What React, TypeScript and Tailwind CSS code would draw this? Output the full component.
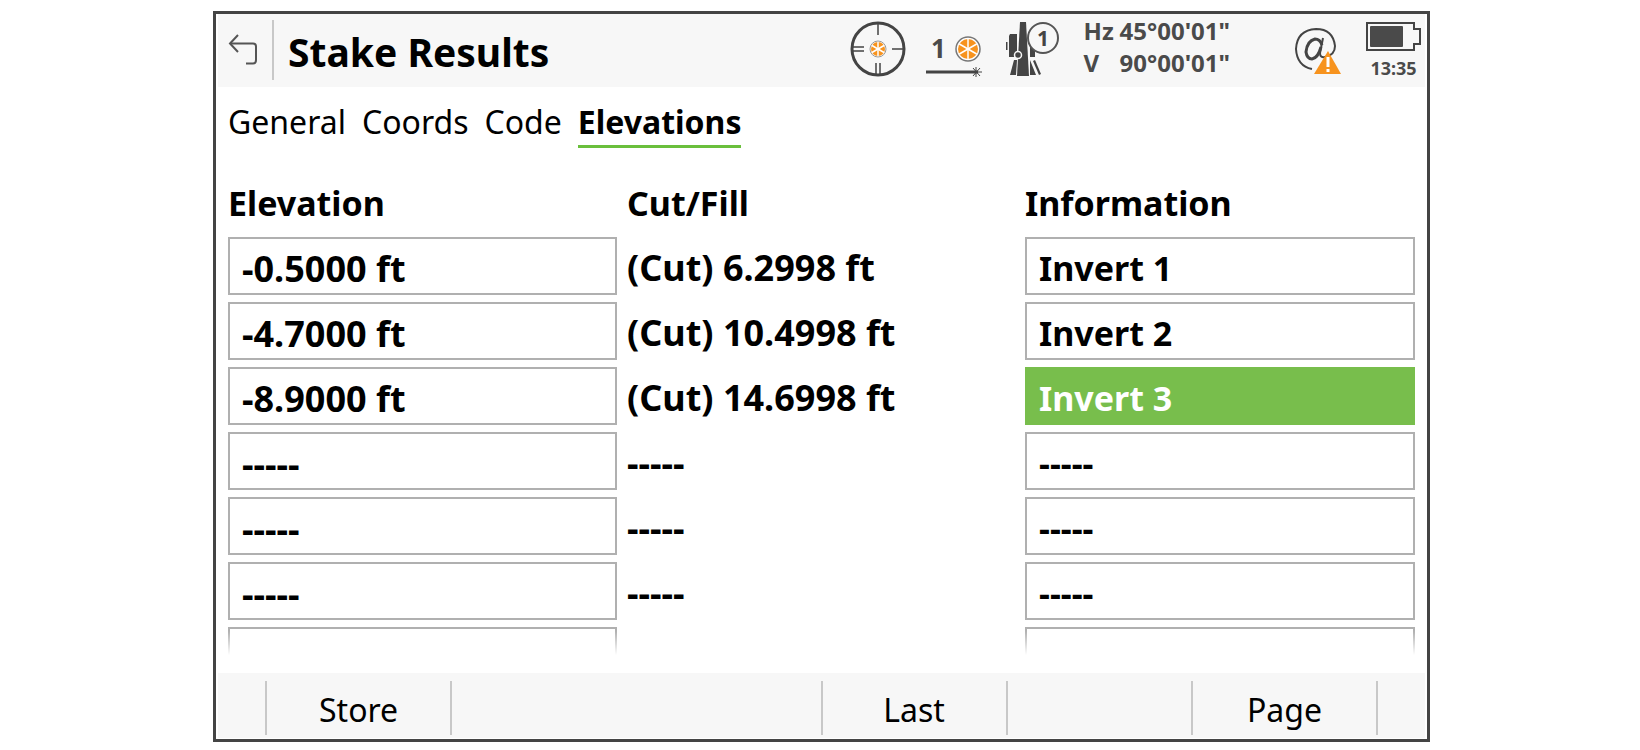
import { useState } from 'react';

interface StakeRow {
  elevation: string;
  cutFill: string;
  info: string;
}

const EMPTY = '-----';

const TABS = ['General', 'Coords', 'Code', 'Elevations'];

const ROWS: StakeRow[] = [
  { elevation: '-0.5000 ft', cutFill: '(Cut) 6.2998 ft', info: 'Invert 1' },
  { elevation: '-4.7000 ft', cutFill: '(Cut) 10.4998 ft', info: 'Invert 2' },
  { elevation: '-8.9000 ft', cutFill: '(Cut) 14.6998 ft', info: 'Invert 3' },
  { elevation: EMPTY, cutFill: EMPTY, info: EMPTY },
  { elevation: EMPTY, cutFill: EMPTY, info: EMPTY },
  { elevation: EMPTY, cutFill: EMPTY, info: EMPTY },
  { elevation: '', cutFill: '', info: '' },
];

// span = number of soft key slots the entry covers
const SOFT_KEYS = [
  { label: 'Store', span: 'col-span-1' },
  { label: '', span: 'col-span-2' },
  { label: 'Last', span: 'col-span-1' },
  { label: '', span: 'col-span-1' },
  { label: 'Page', span: 'col-span-1' },
];

function BackIcon() {
  return (
    <svg width="30" height="32" viewBox="0 0 30 32" fill="none" stroke="#555" strokeWidth="2">
      <path d="M10 1L2 9.500L10 18" />
      <path d="M2 9.500H25Q28 9.500 28 12.500V26Q28 29.500 25 29.500H18" />
    </svg>
  );
}

// Orange prism glyph shared by the target and reflector icons
function Prism({ cx, cy, r }: { cx: number; cy: number; r: number }) {
  return (
    <g stroke="none">
      <circle cx={cx} cy={cy} r={r} fill="#f7931e" />
      {[0, 60, 120].map(a => (
        <line
          key={a}
          x1={cx}
          y1={cy - r}
          x2={cx}
          y2={cy + r}
          stroke="#fff"
          strokeWidth="1.5"
          transform={`rotate(${a} ${cx} ${cy})`}
        />
      ))}
    </g>
  );
}

function TargetIcon() {
  return (
    <svg width="56" height="56" viewBox="0 0 56 56" fill="none" stroke="#444">
      <circle cx="28" cy="28" r="26" strokeWidth="3" />
      <path d="M28 2V14M42 28H54M2 26H14M2 30H14M26 42V54M30 42V54" strokeWidth="1.5" />
      <circle cx="28" cy="28" r="8" fill="#fff" stroke="#999" strokeWidth="1" />
      <Prism cx={28} cy={28} r={7} />
    </svg>
  );
}

function ReflectorIcon() {
  return (
    <svg className="overflow-visible" width="56" height="42" viewBox="0 0 56 42" fill="none" stroke="#444">
      <text x="5" y="22" fill="#4a4a4a" stroke="none" fontSize="26" fontWeight="700">1</text>
      <circle cx="42" cy="13" r="12" fill="#fff" stroke="#777" strokeWidth="1.500" />
      <Prism cx={42} cy={13} r={10} />
      <path d="M0 36H52" strokeWidth="3" />
      <path d="M47 32L54 40M54 32L47 40M50 31V41M50 36H56" strokeWidth="1" />
    </svg>
  );
}

function StationIcon() {
  return (
    <svg width="54" height="56" viewBox="0 0 54 56" fill="#444">
      <rect x="0" y="21" width="1.500" height="8" />
      <path d="M4 13H11V36H3V15Z" />
      <path d="M24 26H29V36H24Z" />
      <path d="M14 1H20L23 55H11Z" />
      <path d="M8 39H11L10 54H4Z" />
      <path d="M24 39L30 54H24Z" />
      <path d="M27 40L29 39L35 53L33 54Z" />
      <circle cx="12" cy="34" r="3.500" stroke="#f7f7f7" strokeWidth="1.500" />
      <circle cx="37" cy="17" r="15" fill="#f7f7f7" stroke="#555" strokeWidth="2" />
      <text x="37" y="25" textAnchor="middle" fontSize="21" fontWeight="700">1</text>
    </svg>
  );
}

function ConnectionIcon() {
  return (
    <svg width="48" height="48" viewBox="0 0 48 48" fill="none" stroke="#444" strokeWidth="3">
      <path d="M29 11L26 26Q26 31 31 30Q41 28 41 19Q39 2 22 2Q3 3 2 22Q3 39 18 42" strokeWidth="2" />
      <path d="M28 18Q26 12 21 12Q13 14 12 25Q13 32 18 32Q24 31 27 20" />
      <path d="M34 24L47 47H20Z" fill="#f7931e" stroke="none" />
      <path d="M34 30V40M34 42V45" stroke="#fff" />
    </svg>
  );
}

function BatteryIcon() {
  return (
    <svg width="55" height="30" viewBox="0 0 55 30" fill="none" stroke="#444" strokeWidth="2">
      <path d="M1 1H48V7H54V22H48V28H1Z" />
      <rect x="4" y="4" width="33" height="21" rx="1" fill="#4a4a4a" stroke="none" />
    </svg>
  );
}

export default function App() {
  const [tab, setTab] = useState('Elevations');
  const [rows, setRows] = useState(ROWS);
  const [selected, setSelected] = useState(2);

  const update = (index: number, key: 'elevation' | 'info', value: string) => {
    setRows(prev => prev.map((row, i) => (i === index ? { ...row, [key]: value } : row)));
  };

  return (
    <div className="min-h-screen bg-white pt-[11px] pr-[210px] pb-[9px] pl-[213px] font-['Noto_Sans',sans-serif] text-black">
      <div className="border-3 border-[#444] px-0.5 pb-px">
        <header className="flex h-[73px] items-center bg-[#f7f7f7]">
          <button type="button" aria-label="Back" className="flex w-[54px] justify-center pr-1 pb-0.5">
            <BackIcon />
          </button>
          <div className="mb-0.5 h-[60px] w-0.5 bg-[#c8c8c8]" />
          <h1 className="ml-3.5 flex-1 pt-0.5 text-[39px] leading-[48px] font-bold whitespace-nowrap">Stake Results</h1>
          <div className="flex items-center text-[#4a4a4a]">
            <div className="pb-1">
              <TargetIcon />
            </div>
            <div className="mt-3 ml-5">
              <ReflectorIcon />
            </div>
            <div className="ml-6 pb-1">
              <StationIcon />
            </div>
            <dl className="ml-6 grid grid-cols-[36px_auto] pb-2 text-[24px] leading-8 font-bold">
              <dt>Hz</dt>
              <dd>45°00'01"</dd>
              <dt>V</dt>
              <dd>90°00'01"</dd>
            </dl>
            <div className="ml-16">
              <ConnectionIcon />
            </div>
            <div className="mr-1 ml-6 flex flex-col items-center pt-1">
              <BatteryIcon />
              <span className="text-[18px] leading-8 font-bold">13:35</span>
            </div>
          </div>
        </header>

        <nav role="tablist" className="flex gap-4 px-2.5 pt-3.5">
          {TABS.map(name => (
            <button
              key={name}
              type="button"
              role="tab"
              aria-selected={tab === name}
              onClick={() => setTab(name)}
              className={`border-b-3 pb-0.5 text-[32px] leading-[42px] ${
                tab === name ? 'border-[#6abf3c] font-bold' : 'border-transparent'
              }`}
            >
              {name}
            </button>
          ))}
        </nav>

        <div className="relative h-[507px] overflow-hidden px-2.5 pt-[26px]">
          <table className="w-full table-fixed border-collapse text-[36px] font-bold">
            <thead>
              <tr className="h-[63px] text-left align-top text-[34px] leading-[58px]">
                <th className="w-[399px]">Elevation</th>
                <th>Cut/Fill</th>
                <th className="w-[390px]">Information</th>
              </tr>
            </thead>
            <tbody>
              {rows.map((row, i) => (
                <tr key={i} className="h-[65px] align-top leading-[54px]">
                  <td className="pr-2.5">
                    <input
                      aria-label={`Elevation ${i + 1}`}
                      value={row.elevation}
                      onChange={e => update(i, 'elevation', e.target.value)}
                      className="block h-[58px] w-full border-2 border-[#b0b0b0] px-3 pt-1 outline-none"
                    />
                  </td>
                  <td className="pt-1 whitespace-nowrap">{row.cutFill}</td>
                  <td>
                    <input
                      aria-label={`Information ${i + 1}`}
                      value={row.info}
                      onFocus={() => setSelected(i)}
                      onChange={e => update(i, 'info', e.target.value)}
                      className={`block h-[58px] w-full border-2 px-3 pt-1 text-[34px] outline-none ${
                        selected === i ? 'border-[#78be4c] bg-[#78be4c] text-white' : 'border-[#b0b0b0]'
                      }`}
                    />
                  </td>
                </tr>
              ))}
            </tbody>
          </table>
          <div className="absolute inset-x-0 bottom-0 h-6 bg-linear-to-b from-transparent to-white" />
        </div>

        <footer className="mt-[18px] bg-[#f7f7f7] px-[47px] pt-2 pb-[3px]">
          <div className="grid grid-cols-6 border-r-2 border-[#c8c8c8]">
            {SOFT_KEYS.map(({ label, span }, i) => (
              <button
                key={i}
                type="button"
                disabled={!label}
                className={`h-[54px] border-l-2 border-[#c8c8c8] pt-1 text-[32px] leading-[48px] ${span}`}
              >
                {label}
              </button>
            ))}
          </div>
        </footer>
      </div>
    </div>
  );
}
